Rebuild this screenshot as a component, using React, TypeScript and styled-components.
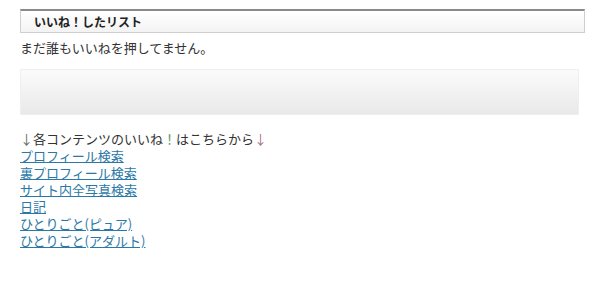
import React from "react";
import styled, { createGlobalStyle } from "styled-components";

const Global = createGlobalStyle`
  html, body { margin: 0; padding: 0; background: #fff; }
  body {
    font-family: "Noto Sans CJK JP", "Noto Sans", sans-serif;
    color: #333;
    font-size: 13px;
  }
`;

const Page = styled.div`
  padding: 9px 17px 0 20px;
  display: flex;
  flex-direction: column;
`;

const Heading = styled.h2`
  margin: 0;
  height: 24px;
  box-sizing: border-box;
  border: 1px solid #cfcfcf;
  border-top: 2px solid #8a8a8a;
  background: linear-gradient(#ffffff, #f3f3f3);
  font-size: 12px;
  font-weight: bold;
  color: #222;
  padding-left: 13px;
  display: flex;
  align-items: center;
  line-height: 1;
`;

const Message = styled.p`
  margin: 6px 0 0;
  line-height: 18px;
  font-size: 13px;
`;

const GrayBox = styled.div`
  margin: 12px 6px 0 0;
  height: 44px;
  border: 1px solid #efefef;
  background: linear-gradient(#fbfbfb, #e9e9e9);
`;

const Intro = styled.p`
  margin: 15px 0 0;
  line-height: 17px;
  font-size: 13px;
`;

const Arrow = styled.span<{ $c: string }>`
  color: ${(p) => p.$c};
`;

const LinkList = styled.div`
  display: flex;
  flex-direction: column;
  align-items: flex-start;
`;

const Link = styled.a`
  color: #2a78a6;
  text-decoration: underline;
  line-height: 17px;
  font-size: 13px;
`;

const links = [
  "プロフィール検索",
  "裏プロフィール検索",
  "サイト内全写真検索",
  "日記",
  "ひとりごと(ピュア)",
  "ひとりごと(アダルト)",
];

export default function App() {
  return (
    <>
      <Global />
      <Page>
        <Heading>いいね！したリスト</Heading>
        <Message>まだ誰もいいねを押してません。</Message>
        <GrayBox />
        <Intro>
          <Arrow $c="#5c6e62">↓</Arrow>各コンテンツのいいね
          <Arrow $c="#5f9a5f">！</Arrow>はこちらから
          <Arrow $c="#a86f80">↓</Arrow>
        </Intro>
        <LinkList>
          {links.map((l) => (
            <Link key={l} href="#">
              {l}
            </Link>
          ))}
        </LinkList>
      </Page>
    </>
  );
}
